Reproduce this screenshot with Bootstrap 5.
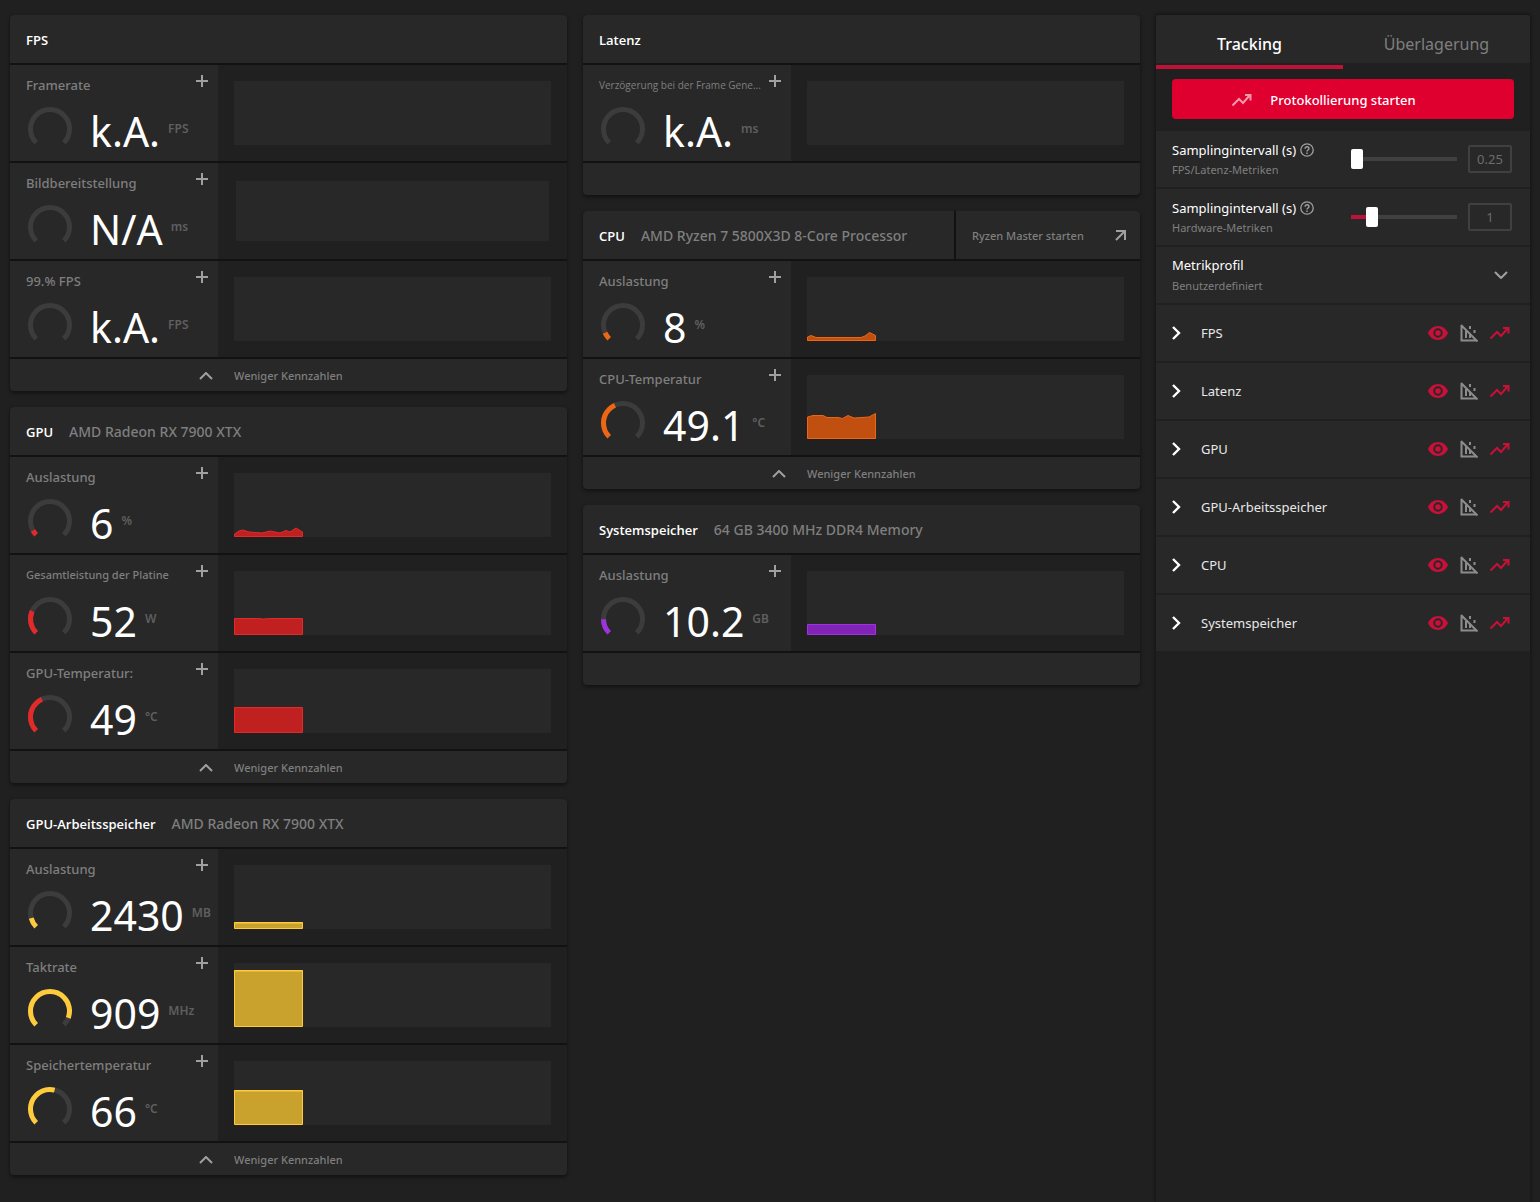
<!DOCTYPE html>
<html lang="de" data-bs-theme="dark">
<head>
<meta charset="utf-8">
<meta name="viewport" content="width=device-width, initial-scale=1">
<title>Leistung – Tracking</title>
<link href="https://cdn.jsdelivr.net/npm/bootstrap@5.3.0/dist/css/bootstrap.min.css" rel="stylesheet">
<style>
:root{--page:#202020;--panel:#282828;--rule:#121212;--muted:#7f7f7f;--faint:#5f5f5f;--accent:#e0002f;--accent-dim:#bd1338}
body{background:var(--page);color:#fff;font-family:"Noto Sans","Open Sans",sans-serif;font-size:13px;line-height:20px}
button{color:inherit;background:none;border:0;padding:0;font-weight:500}
svg{display:block;flex:none}
.dash{padding:15px 10px 0;min-height:100vh}
.dash-col{flex:1 1 0;min-width:0}
.panel{background:var(--rule);border-radius:4px;box-shadow:0 2px 4px rgba(0,0,0,.5);display:flex;flex-direction:column;gap:2px;overflow:hidden}
.panel-head{display:flex;gap:2px;height:48px}
.panel-title{flex:1;display:flex;align-items:center;gap:16px;padding:1px 16px 0;background:var(--panel);min-width:0}
.panel-title h2{font-family:"Open Sans",sans-serif;font-size:13px;line-height:20px;font-weight:600;margin:0}
.device{font-size:14px;font-weight:500;color:var(--muted)}
.launch{width:184px;background:var(--panel);display:flex;align-items:center;justify-content:space-between;padding:1px 14px 0 16px;font-size:11px;color:var(--muted)}
.metric{display:flex;height:96px;background:var(--page)}
.reading{width:208px;flex:none;background:var(--panel);padding:10px 10px 0 16px}
.reading-label{font-weight:500;line-height:20px;color:var(--muted);white-space:nowrap}
.label-sm{font-size:11px}
.label-xs{font-size:10px;font-weight:400;font-family:"Open Sans",sans-serif}
.reading-body{display:flex;align-items:center;height:48px;margin-top:10px}
.value{font-size:41px;line-height:48px;margin-left:16px;padding-top:4px}
.unit{font-size:12px;font-weight:600;color:var(--faint);margin-left:8px}
.plus{color:#a0a0a0}
.gauge{width:48px;height:48px;fill:none;stroke-width:5}
.gauge .track{stroke:#3c3c3c}
.gauge .level{stroke:var(--c)}
.plot-area{flex:1;padding:16px}
.plot-inset{padding:18px}
.plot{height:100%;background:var(--panel)}
.plot svg{fill:var(--f);stroke:var(--c);stroke-width:1}
.tone-red{--c:#e32a2a;--f:#c02020}
.tone-yellow{--c:#fdcb3c;--f:#c8a22d}
.tone-orange{--c:#ec6614;--f:#c04f10}
.tone-violet{--c:#9c33dc;--f:#8023b6}
.panel-foot{height:32px;width:100%;background:var(--panel);color:var(--muted);font-size:11px;text-align:left;display:flex;align-items:center;gap:21px;padding:1px 0 0 189px}
.side{width:374px;flex:none;box-shadow:0 0 3px 1px rgba(0,0,0,.4)}
.side-tabs{height:48px;background:var(--panel);border-radius:4px 4px 0 0;display:flex}
.side-tab{flex:1;height:54px;border-bottom:4px solid transparent;padding-top:8px;font-size:16px;font-weight:400;color:var(--muted)}
.side-tab.active{color:#fff;font-weight:500;border-color:var(--accent-dim)}
.start{display:grid;grid-template-columns:1fr auto 1fr;align-items:center;gap:16px;width:100%;height:40px;border-radius:4px;background:var(--accent);padding-top:1px}
.side-row{height:56px;margin-bottom:2px;background:var(--panel);display:flex;align-items:center;padding:0 18px 0 16px}
.side-row label{display:block}
.hint{font-size:11px;color:var(--muted)}
.interval-text{width:179px;flex:none;padding-top:2px}
.interval{appearance:none;flex:1;min-width:0;height:20px;margin:0;background:linear-gradient(to right,var(--accent-dim) var(--fill),#404040 var(--fill)) center/100% 4px no-repeat}
.interval::-webkit-slider-thumb{appearance:none;width:12px;height:20px;border-radius:2px;background:#fff}
.interval::-moz-range-thumb{width:12px;height:20px;border:0;border-radius:2px;background:#fff}
.number{width:44px;height:28px;border:2px solid #404040;border-radius:2px;background:none;color:#6c6c6c;text-align:center;padding:0;margin-left:11px}
.profile{appearance:none;border:0;background:none;padding:0;width:100%;height:20px;line-height:20px}
.group-open{flex:1;display:flex;align-items:center;gap:20px;text-align:left;color:#e8e8e8;font-weight:400;height:100%}
.group-icons{display:flex;gap:7px}
.icon-on{color:#c91039}
.icon-off{color:#8c8c8c}
@media (max-width:1199px){.dash{flex-wrap:wrap}.dash-col{flex-basis:460px}.side{width:100%}}
</style>
<script src="https://cdn.jsdelivr.net/npm/bootstrap@5.3.0/dist/js/bootstrap.bundle.min.js" defer></script>
</head>
<body>
<svg width="0" height="0" class="position-absolute" aria-hidden="true">
  <symbol id="i-plus" viewBox="0 0 12 12"><path d="M6 0v12M0 6h12" stroke="currentColor" stroke-width="2"/></symbol>
  <symbol id="i-up" viewBox="0 0 14 8"><path d="M1 7l6-6 6 6" fill="none" stroke="currentColor" stroke-width="2"/></symbol>
  <symbol id="i-down" viewBox="0 0 14 8"><path d="M1 1l6 6 6-6" fill="none" stroke="currentColor" stroke-width="2"/></symbol>
  <symbol id="i-right" viewBox="0 0 9 14"><path d="M1 1l6 6-6 6" fill="none" stroke="currentColor" stroke-width="2.4"/></symbol>
  <symbol id="i-out" viewBox="0 0 11 11"><path d="M1 1h9v9M10 1L1 10" fill="none" stroke="currentColor" stroke-width="2"/></symbol>
  <symbol id="i-help" viewBox="0 0 14 14"><circle cx="7" cy="7" r="6.2" fill="none" stroke="currentColor" stroke-width="1.3"/><path d="M5.1 5.7c0-2.6 3.9-2.4 3.9-.1 0 1.4-2 1.5-2 3M7 9.6v1.5" fill="none" stroke="currentColor" stroke-width="1.4"/></symbol>
  <symbol id="i-eye" viewBox="0 0 24 24"><path fill="currentColor" fill-rule="evenodd" d="M12 5C7.500 5 3.700 7.800 2 12c1.700 4.200 5.500 7 10 7s8.300-2.800 10-7c-1.700-4.200-5.500-7-10-7zm0 11.700a4.700 4.700 0 1 1 0-9.400 4.700 4.700 0 0 1 0 9.400zm0-7.500a2.800 2.800 0 1 0 0 5.600 2.800 2.800 0 0 0 0-5.600z"/></symbol>
  <symbol id="i-nochart" viewBox="0 0 24 24"><path fill="none" stroke="currentColor" stroke-width="2" d="M4.500 4v15.500H20M4 4l16.500 16.500M9 10V17M13 5v3M13 13v4M17.500 9v3"/></symbol>
  <symbol id="i-trend" viewBox="0 0 24 24"><path fill="none" stroke="currentColor" stroke-width="2" d="M2.500 17.500l6.500-6.500 4 4 7-8M15 7h5.500v5.500"/></symbol>
</svg>

<main class="dash d-flex gap-3">
  <div class="dash-col">
    <section class="panel mb-3">
      <div class="panel-head"><div class="panel-title"><h2>FPS</h2></div></div>
      <div class="metric">
        <div class="reading">
          <div class="d-flex justify-content-between align-items-start"><span class="reading-label">Framerate</span><button class="plus" aria-label="Framerate hinzufügen"><svg width="12" height="12"><use href="#i-plus"/></svg></button></div>
          <div class="reading-body"><svg class="gauge" viewBox="-24 -24 48 48"><path class="track" d="M-13.800 13.800A19.500 19.500 0 1 1 13.800 13.800"/></svg><span class="value">k.A.</span><span class="unit">FPS</span></div>
        </div>
        <div class="plot-area"><div class="plot"></div></div>
      </div>
      <div class="metric">
        <div class="reading">
          <div class="d-flex justify-content-between align-items-start"><span class="reading-label">Bildbereitstellung</span><button class="plus" aria-label="Bildbereitstellung hinzufügen"><svg width="12" height="12"><use href="#i-plus"/></svg></button></div>
          <div class="reading-body"><svg class="gauge" viewBox="-24 -24 48 48"><path class="track" d="M-13.800 13.800A19.500 19.500 0 1 1 13.800 13.800"/></svg><span class="value">N/A</span><span class="unit">ms</span></div>
        </div>
        <div class="plot-area plot-inset"><div class="plot"></div></div>
      </div>
      <div class="metric">
        <div class="reading">
          <div class="d-flex justify-content-between align-items-start"><span class="reading-label">99.% FPS</span><button class="plus" aria-label="99.% FPS hinzufügen"><svg width="12" height="12"><use href="#i-plus"/></svg></button></div>
          <div class="reading-body"><svg class="gauge" viewBox="-24 -24 48 48"><path class="track" d="M-13.800 13.800A19.500 19.500 0 1 1 13.800 13.800"/></svg><span class="value">k.A.</span><span class="unit">FPS</span></div>
        </div>
        <div class="plot-area"><div class="plot"></div></div>
      </div>
      <button class="panel-foot"><svg class="plus" width="14" height="8"><use href="#i-up"/></svg><span>Weniger Kennzahlen</span></button>
    </section>

    <section class="panel mb-3 tone-red">
      <div class="panel-head"><div class="panel-title"><h2>GPU</h2><span class="device">AMD Radeon RX 7900 XTX</span></div></div>
      <div class="metric">
        <div class="reading">
          <div class="d-flex justify-content-between align-items-start"><span class="reading-label">Auslastung</span><button class="plus" aria-label="Auslastung hinzufügen"><svg width="12" height="12"><use href="#i-plus"/></svg></button></div>
          <div class="reading-body"><svg class="gauge" viewBox="-24 -24 48 48"><path class="track" d="M-13.800 13.800A19.500 19.500 0 1 1 13.800 13.800"/><path class="level" pathLength="100" stroke-dasharray="6 200" d="M-13.800 13.800A19.500 19.500 0 1 1 13.800 13.800"/></svg><span class="value">6</span><span class="unit">%</span></div>
        </div>
        <div class="plot-area"><div class="plot"><svg width="69" height="64"><path d="M.5 63.500V61L5 58l4-1 6 2 7 .5L28 60l8-2 10 2 6-2.500 4 1.500 6-4 6.500 4v4.500z"/></svg></div></div>
      </div>
      <div class="metric">
        <div class="reading">
          <div class="d-flex justify-content-between align-items-start"><span class="reading-label label-sm">Gesamtleistung der Platine</span><button class="plus" aria-label="Gesamtleistung der Platine hinzufügen"><svg width="12" height="12"><use href="#i-plus"/></svg></button></div>
          <div class="reading-body"><svg class="gauge" viewBox="-24 -24 48 48"><path class="track" d="M-13.800 13.800A19.500 19.500 0 1 1 13.800 13.800"/><path class="level" pathLength="100" stroke-dasharray="25.500 200" d="M-13.800 13.800A19.500 19.500 0 1 1 13.800 13.800"/></svg><span class="value">52</span><span class="unit">W</span></div>
        </div>
        <div class="plot-area"><div class="plot"><svg width="69" height="64"><path d="M.5 63.500v-16h23l6 .5 6-.5h33v16z"/></svg></div></div>
      </div>
      <div class="metric">
        <div class="reading">
          <div class="d-flex justify-content-between align-items-start"><span class="reading-label">GPU-Temperatur:</span><button class="plus" aria-label="GPU-Temperatur hinzufügen"><svg width="12" height="12"><use href="#i-plus"/></svg></button></div>
          <div class="reading-body"><svg class="gauge" viewBox="-24 -24 48 48"><path class="track" d="M-13.800 13.800A19.500 19.500 0 1 1 13.800 13.800"/><path class="level" pathLength="100" stroke-dasharray="41 200" d="M-13.800 13.800A19.500 19.500 0 1 1 13.800 13.800"/></svg><span class="value">49</span><span class="unit">°C</span></div>
        </div>
        <div class="plot-area"><div class="plot"><svg width="69" height="64"><path d="M.5 63.500v-25h68v25z"/></svg></div></div>
      </div>
      <button class="panel-foot"><svg class="plus" width="14" height="8"><use href="#i-up"/></svg><span>Weniger Kennzahlen</span></button>
    </section>

    <section class="panel mb-3 tone-yellow">
      <div class="panel-head"><div class="panel-title"><h2>GPU-Arbeitsspeicher</h2><span class="device">AMD Radeon RX 7900 XTX</span></div></div>
      <div class="metric">
        <div class="reading">
          <div class="d-flex justify-content-between align-items-start"><span class="reading-label">Auslastung</span><button class="plus" aria-label="Auslastung hinzufügen"><svg width="12" height="12"><use href="#i-plus"/></svg></button></div>
          <div class="reading-body"><svg class="gauge" viewBox="-24 -24 48 48"><path class="track" d="M-13.800 13.800A19.500 19.500 0 1 1 13.800 13.800"/><path class="level" pathLength="100" stroke-dasharray="11 200" d="M-13.800 13.800A19.500 19.500 0 1 1 13.800 13.800"/></svg><span class="value">2430</span><span class="unit">MB</span></div>
        </div>
        <div class="plot-area"><div class="plot"><svg width="69" height="64"><path d="M.5 63.500v-6h68v6z"/><path d="M0 58h69"/></svg></div></div>
      </div>
      <div class="metric">
        <div class="reading">
          <div class="d-flex justify-content-between align-items-start"><span class="reading-label">Taktrate</span><button class="plus" aria-label="Taktrate hinzufügen"><svg width="12" height="12"><use href="#i-plus"/></svg></button></div>
          <div class="reading-body"><svg class="gauge" viewBox="-24 -24 48 48"><path class="track" d="M-13.800 13.800A19.500 19.500 0 1 1 13.800 13.800"/><path class="level" pathLength="100" stroke-dasharray="91 200" d="M-13.800 13.800A19.500 19.500 0 1 1 13.800 13.800"/></svg><span class="value">909</span><span class="unit">MHz</span></div>
        </div>
        <div class="plot-area"><div class="plot"><svg width="69" height="64"><path d="M.5 63.500v-56h68v56z"/><path d="M0 8h69"/></svg></div></div>
      </div>
      <div class="metric">
        <div class="reading">
          <div class="d-flex justify-content-between align-items-start"><span class="reading-label">Speichertemperatur</span><button class="plus" aria-label="Speichertemperatur hinzufügen"><svg width="12" height="12"><use href="#i-plus"/></svg></button></div>
          <div class="reading-body"><svg class="gauge" viewBox="-24 -24 48 48"><path class="track" d="M-13.800 13.800A19.500 19.500 0 1 1 13.800 13.800"/><path class="level" pathLength="100" stroke-dasharray="55 200" d="M-13.800 13.800A19.500 19.500 0 1 1 13.800 13.800"/></svg><span class="value">66</span><span class="unit">°C</span></div>
        </div>
        <div class="plot-area"><div class="plot"><svg width="69" height="64"><path d="M.5 63.500v-34h68v34z"/><path d="M0 30h69"/></svg></div></div>
      </div>
      <button class="panel-foot"><svg class="plus" width="14" height="8"><use href="#i-up"/></svg><span>Weniger Kennzahlen</span></button>
    </section>
  </div>

  <div class="dash-col">
    <section class="panel mb-3">
      <div class="panel-head"><div class="panel-title"><h2>Latenz</h2></div></div>
      <div class="metric">
        <div class="reading">
          <div class="d-flex justify-content-between align-items-start"><span class="reading-label label-xs">Verzögerung bei der Frame Gene...</span><button class="plus" aria-label="Verzögerung hinzufügen"><svg width="12" height="12"><use href="#i-plus"/></svg></button></div>
          <div class="reading-body"><svg class="gauge" viewBox="-24 -24 48 48"><path class="track" d="M-13.800 13.800A19.500 19.500 0 1 1 13.800 13.800"/></svg><span class="value">k.A.</span><span class="unit">ms</span></div>
        </div>
        <div class="plot-area"><div class="plot"></div></div>
      </div>
      <div class="panel-foot"></div>
    </section>

    <section class="panel mb-3 tone-orange">
      <div class="panel-head"><div class="panel-title"><h2>CPU</h2><span class="device">AMD Ryzen 7 5800X3D 8-Core Processor</span></div><button class="launch">Ryzen Master starten<svg class="plus" width="11" height="11"><use href="#i-out"/></svg></button></div>
      <div class="metric">
        <div class="reading">
          <div class="d-flex justify-content-between align-items-start"><span class="reading-label">Auslastung</span><button class="plus" aria-label="Auslastung hinzufügen"><svg width="12" height="12"><use href="#i-plus"/></svg></button></div>
          <div class="reading-body"><svg class="gauge" viewBox="-24 -24 48 48"><path class="track" d="M-13.800 13.800A19.500 19.500 0 1 1 13.800 13.800"/><path class="level" pathLength="100" stroke-dasharray="8 200" d="M-13.800 13.800A19.500 19.500 0 1 1 13.800 13.800"/></svg><span class="value">8</span><span class="unit">%</span></div>
        </div>
        <div class="plot-area"><div class="plot"><svg width="69" height="64"><path d="M.5 63.500V60L4 58.500 9 60.500h45l4-1.500 4.500-3.500 6 3v5z"/></svg></div></div>
      </div>
      <div class="metric">
        <div class="reading">
          <div class="d-flex justify-content-between align-items-start"><span class="reading-label">CPU-Temperatur</span><button class="plus" aria-label="CPU-Temperatur hinzufügen"><svg width="12" height="12"><use href="#i-plus"/></svg></button></div>
          <div class="reading-body"><svg class="gauge" viewBox="-24 -24 48 48"><path class="track" d="M-13.800 13.800A19.500 19.500 0 1 1 13.800 13.800"/><path class="level" pathLength="100" stroke-dasharray="41 200" d="M-13.800 13.800A19.500 19.500 0 1 1 13.800 13.800"/></svg><span class="value">49.1</span><span class="unit">°C</span></div>
        </div>
        <div class="plot-area"><div class="plot"><svg width="69" height="64"><path d="M.5 63.500V42L6 40.500h10l4 2h11l4.500 1L41 40.500l6 2.500 15-1 6.500-3.500v25z"/></svg></div></div>
      </div>
      <button class="panel-foot"><svg class="plus" width="14" height="8"><use href="#i-up"/></svg><span>Weniger Kennzahlen</span></button>
    </section>

    <section class="panel mb-3 tone-violet">
      <div class="panel-head"><div class="panel-title"><h2>Systemspeicher</h2><span class="device">64 GB 3400 MHz DDR4 Memory</span></div></div>
      <div class="metric">
        <div class="reading">
          <div class="d-flex justify-content-between align-items-start"><span class="reading-label">Auslastung</span><button class="plus" aria-label="Auslastung hinzufügen"><svg width="12" height="12"><use href="#i-plus"/></svg></button></div>
          <div class="reading-body"><svg class="gauge" viewBox="-24 -24 48 48"><path class="track" d="M-13.800 13.800A19.500 19.500 0 1 1 13.800 13.800"/><path class="level" pathLength="100" stroke-dasharray="16.500 200" d="M-13.800 13.800A19.500 19.500 0 1 1 13.800 13.800"/></svg><span class="value">10.2</span><span class="unit">GB</span></div>
        </div>
        <div class="plot-area"><div class="plot"><svg width="69" height="64"><path d="M.5 63.500v-10h68v10z"/></svg></div></div>
      </div>
      <div class="panel-foot"></div>
    </section>
  </div>

  <aside class="side">
    <div class="side-tabs" role="tablist">
      <button class="side-tab active" role="tab" aria-selected="true">Tracking</button>
      <button class="side-tab" role="tab" aria-selected="false">Überlagerung</button>
    </div>
    <div class="p-3 pb-2 mb-1">
      <button class="start"><svg class="ms-auto" width="24" height="24" opacity=".6"><use href="#i-trend"/></svg><span>Protokollierung starten</span></button>
    </div>
    <div class="side-row">
      <div class="interval-text">
        <label for="iv-fps" class="d-flex align-items-center gap-1">Samplingintervall (s)<svg class="plus" width="14" height="14"><use href="#i-help"/></svg></label>
        <div class="hint">FPS/Latenz-Metriken</div>
      </div>
      <input type="range" class="interval" id="iv-fps" min="0.25" max="5" step="0.25" value="0.25" style="--fill:0%">
      <input type="text" class="number" value="0.25" aria-label="FPS/Latenz-Intervall">
    </div>
    <div class="side-row">
      <div class="interval-text">
        <label for="iv-hw" class="d-flex align-items-center gap-1">Samplingintervall (s)<svg class="plus" width="14" height="14"><use href="#i-help"/></svg></label>
        <div class="hint">Hardware-Metriken</div>
      </div>
      <input type="range" class="interval" id="iv-hw" min="0.25" max="5" step="0.25" value="1" style="--fill:16%">
      <input type="text" class="number" value="1" aria-label="Hardware-Intervall">
    </div>
    <div class="side-row">
      <div class="flex-grow-1">
        <label for="profile">Metrikprofil</label>
        <select class="profile hint" id="profile"><option>Benutzerdefiniert</option></select>
      </div>
      <svg class="plus me-1" width="14" height="8"><use href="#i-down"/></svg>
    </div>
    <div class="side-row">
      <button class="group-open"><svg width="9" height="14" color="#fff"><use href="#i-right"/></svg>FPS</button>
      <div class="group-icons"><button class="icon-on" aria-label="Anzeigen"><svg width="24" height="24"><use href="#i-eye"/></svg></button><button class="icon-off" aria-label="Diagramm"><svg width="24" height="24"><use href="#i-nochart"/></svg></button><button class="icon-on" aria-label="Protokollieren"><svg width="24" height="24"><use href="#i-trend"/></svg></button></div>
    </div>
    <div class="side-row">
      <button class="group-open"><svg width="9" height="14" color="#fff"><use href="#i-right"/></svg>Latenz</button>
      <div class="group-icons"><button class="icon-on" aria-label="Anzeigen"><svg width="24" height="24"><use href="#i-eye"/></svg></button><button class="icon-off" aria-label="Diagramm"><svg width="24" height="24"><use href="#i-nochart"/></svg></button><button class="icon-on" aria-label="Protokollieren"><svg width="24" height="24"><use href="#i-trend"/></svg></button></div>
    </div>
    <div class="side-row">
      <button class="group-open"><svg width="9" height="14" color="#fff"><use href="#i-right"/></svg>GPU</button>
      <div class="group-icons"><button class="icon-on" aria-label="Anzeigen"><svg width="24" height="24"><use href="#i-eye"/></svg></button><button class="icon-off" aria-label="Diagramm"><svg width="24" height="24"><use href="#i-nochart"/></svg></button><button class="icon-on" aria-label="Protokollieren"><svg width="24" height="24"><use href="#i-trend"/></svg></button></div>
    </div>
    <div class="side-row">
      <button class="group-open"><svg width="9" height="14" color="#fff"><use href="#i-right"/></svg>GPU-Arbeitsspeicher</button>
      <div class="group-icons"><button class="icon-on" aria-label="Anzeigen"><svg width="24" height="24"><use href="#i-eye"/></svg></button><button class="icon-off" aria-label="Diagramm"><svg width="24" height="24"><use href="#i-nochart"/></svg></button><button class="icon-on" aria-label="Protokollieren"><svg width="24" height="24"><use href="#i-trend"/></svg></button></div>
    </div>
    <div class="side-row">
      <button class="group-open"><svg width="9" height="14" color="#fff"><use href="#i-right"/></svg>CPU</button>
      <div class="group-icons"><button class="icon-on" aria-label="Anzeigen"><svg width="24" height="24"><use href="#i-eye"/></svg></button><button class="icon-off" aria-label="Diagramm"><svg width="24" height="24"><use href="#i-nochart"/></svg></button><button class="icon-on" aria-label="Protokollieren"><svg width="24" height="24"><use href="#i-trend"/></svg></button></div>
    </div>
    <div class="side-row">
      <button class="group-open"><svg width="9" height="14" color="#fff"><use href="#i-right"/></svg>Systemspeicher</button>
      <div class="group-icons"><button class="icon-on" aria-label="Anzeigen"><svg width="24" height="24"><use href="#i-eye"/></svg></button><button class="icon-off" aria-label="Diagramm"><svg width="24" height="24"><use href="#i-nochart"/></svg></button><button class="icon-on" aria-label="Protokollieren"><svg width="24" height="24"><use href="#i-trend"/></svg></button></div>
    </div>
  </aside>
</main>
</body>
</html>
